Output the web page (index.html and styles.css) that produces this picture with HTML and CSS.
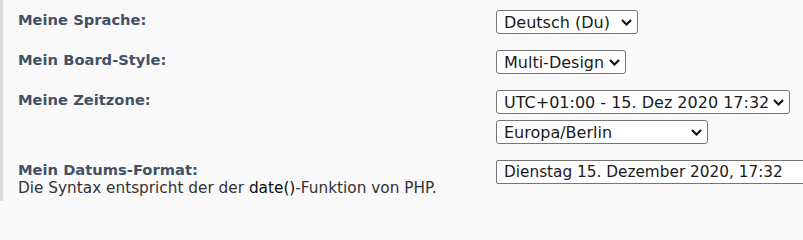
FILE: index.html
```html
<!DOCTYPE html>
<html lang="de">
<head>
<meta charset="utf-8">
<title>Einstellungen</title>
<link rel="stylesheet" href="styles.css">
</head>
<body>
<div class="panel">
  <dl class="settings">
    <div class="row">
      <dt class="label"><strong>Meine Sprache:</strong></dt>
      <dd class="field">
        <span class="selwrap"><select class="sel sel-lang"><option>Deutsch (Du)</option></select><svg class="chev" viewBox="0 0 11 7" width="11" height="7"><path d="M1 1 L5.5 5.5 L10 1" fill="none" stroke="#111" stroke-width="2.2"/></svg></span>
      </dd>
    </div>
    <div class="row">
      <dt class="label"><strong>Mein Board-Style:</strong></dt>
      <dd class="field">
        <span class="selwrap"><select class="sel sel-style"><option>Multi-Design</option></select><svg class="chev" viewBox="0 0 11 7" width="11" height="7"><path d="M1 1 L5.5 5.5 L10 1" fill="none" stroke="#111" stroke-width="2.2"/></svg></span>
      </dd>
    </div>
    <div class="row">
      <dt class="label"><strong>Meine Zeitzone:</strong></dt>
      <dd class="field stack">
        <span class="selwrap"><select class="sel sel-tz"><option>UTC+01:00 - 15. Dez 2020 17:32</option></select><svg class="chev" viewBox="0 0 11 7" width="11" height="7"><path d="M1 1 L5.5 5.5 L10 1" fill="none" stroke="#111" stroke-width="2.2"/></svg></span>
        <span class="selwrap"><select class="sel sel-zone"><option>Europa/Berlin</option></select><svg class="chev" viewBox="0 0 11 7" width="11" height="7"><path d="M1 1 L5.5 5.5 L10 1" fill="none" stroke="#111" stroke-width="2.2"/></svg></span>
      </dd>
    </div>
    <div class="row">
      <dt class="label"><strong>Mein Datums-Format:</strong><br><span class="explain">Die Syntax entspricht der der <span class="code">date()</span>-Funktion von PHP.</span></dt>
      <dd class="field">
        <input class="inp" type="text" value="Dienstag 15. Dezember 2020, 17:32">
      </dd>
    </div>
  </dl>
</div>
</body>
</html>
```
FILE: styles.css
```css
html, body {
  margin: 0;
  padding: 0;
  background: #f9f9f9;
}
body {
  font-family: "DejaVu Sans", Verdana, sans-serif;
  color: #333;
  overflow: hidden;
  height: 201px;
}
.panel {
  border-left: 3px solid #dcdcdc;
  height: 201px;
  box-sizing: border-box;
  padding: 10px 0 0 15px;
}
.settings {
  margin: 0;
  display: flex;
  flex-direction: column;
  gap: 16px;
}
.row {
  display: flex;
  align-items: flex-start;
}
.label {
  width: 478px;
  flex: none;
  font-size: 14.7px;
  line-height: 18px;
  padding-top: 1px;
}
.label strong {
  color: #435167;
  font-weight: bold;
}
.explain {
  color: #333;
  font-size: 15.3px;
  line-height: 19px;
}
.code {
  color: #0a0a0a;
}
.field {
  margin: 0;
  flex: 1;
  min-width: 0;
}
.stack {
  display: flex;
  flex-direction: column;
  align-items: flex-start;
  gap: 6px;
}
.selwrap {
  position: relative;
  display: block;
  width: max-content;
}
.chev {
  position: absolute;
  right: 6px;
  top: 9px;
  pointer-events: none;
}
.sel {
  -webkit-appearance: none;
  appearance: none;
  font-family: "DejaVu Sans", Verdana, sans-serif;
  font-size: 16px;
  height: 24px;
  color: #1a1a1a;
  background: #fff;
  border: 1px solid #767676;
  border-radius: 3px;
  padding: 0 0 0 7px;
  display: block;
  box-sizing: border-box;
}
.sel-lang { width: 142px; }
.sel-style { width: 130px; }
.sel-tz { width: 294px; }
.sel-zone { width: 212px; }
.inp {
  font-family: "DejaVu Sans", Verdana, sans-serif;
  font-size: 15.3px;
  color: #1a1a1a;
  height: 24px;
  box-sizing: border-box;
  width: 330px;
  border: 1px solid #767676;
  border-radius: 2px;
  padding: 0 7px;
  background: #fff;
  display: block;
}
```
